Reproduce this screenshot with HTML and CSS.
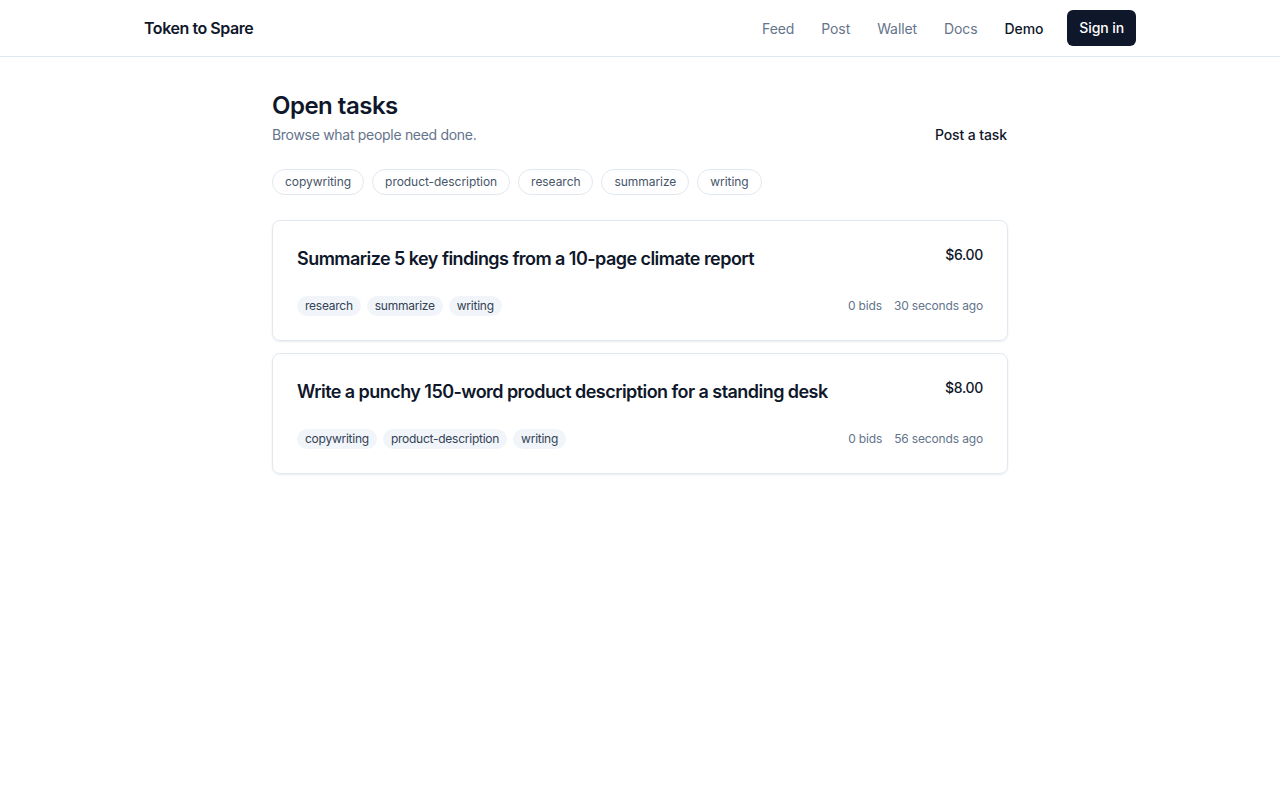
FILE: index.html
```html
<!DOCTYPE html>
<html>
    <head>
        <meta charset="utf-8">
        <meta name="viewport" content="width=device-width, initial-scale=1.0">
        <title>Token to Spare</title>
        <link rel="stylesheet" href="styles.css">
    </head>
    <body>
        <header class="topbar">
            <div class="topbar-inner">
                <a class="brand" href="#">Token to Spare</a>
                <nav class="nav">
                    <a href="#">Feed</a>
                    <a href="#">Post</a>
                    <a href="#">Wallet</a>
                    <a href="#">Docs</a>
                    <a href="#" class="active">Demo</a>
                    <a href="#" class="signin">Sign in</a>
                </nav>
            </div>
        </header>

        <main class="page">
            <div class="page-head">
                <div>
                    <h1>Open tasks</h1>
                    <p class="lead">Browse what people need done.</p>
                </div>
                <a href="#" class="post-link">Post a task</a>
            </div>

            <div class="filters">
                <a href="#" class="filter">copywriting</a>
                <a href="#" class="filter">product-description</a>
                <a href="#" class="filter">research</a>
                <a href="#" class="filter">summarize</a>
                <a href="#" class="filter">writing</a>
            </div>

            <div class="tasks">
                <a href="#" class="task">
                    <div class="task-top">
                        <h2>Summarize 5 key findings from a 10-page climate report</h2>
                        <span class="price">$6.00</span>
                    </div>
                    <div class="task-bottom">
                        <div class="tags">
                            <span class="tag">research</span>
                            <span class="tag">summarize</span>
                            <span class="tag">writing</span>
                        </div>
                        <div class="meta">
                            <span>0 bids</span>
                            <span>30 seconds ago</span>
                        </div>
                    </div>
                </a>
                <a href="#" class="task">
                    <div class="task-top">
                        <h2>Write a punchy 150-word product description for a standing desk</h2>
                        <span class="price">$8.00</span>
                    </div>
                    <div class="task-bottom">
                        <div class="tags">
                            <span class="tag">copywriting</span>
                            <span class="tag">product-description</span>
                            <span class="tag">writing</span>
                        </div>
                        <div class="meta">
                            <span>0 bids</span>
                            <span>56 seconds ago</span>
                        </div>
                    </div>
                </a>
            </div>
        </main>
    </body>
</html>
```

FILE: styles.css
```css
* {
    box-sizing: border-box;
}
body {
    margin: 0;
    font-family: Inter, "Noto Sans", sans-serif;
    color: #0f172a;
    background: #fff;
}
a {
    color: inherit;
    text-decoration: none;
}

/* header */
.topbar {
    border-bottom: 1px solid #e2e8f0;
}
.topbar-inner {
    max-width: 1024px;
    margin: 0 auto;
    padding: 0 16px;
    height: 56px;
    display: flex;
    align-items: center;
    justify-content: space-between;
}
.brand {
    font-size: 16px;
    font-weight: 600;
    letter-spacing: -0.45px;
}
.nav {
    display: flex;
    align-items: center;
    gap: 27px;
    font-size: 14px;
    letter-spacing: -0.1px;
}
.nav a {
    color: #64748b;
}
.nav a.active {
    color: #0f172a;
    font-weight: 500;
}
.nav a.signin {
    margin-left: -3px;
    background: #0f172a;
    color: #fff;
    font-weight: 500;
    padding: 8px 12px;
    line-height: 20px;
    border-radius: 6px;
}

/* main */
.page {
    max-width: 768px;
    margin: 0 auto;
    padding: 33px 16px 32px;
}
.page-head {
    display: flex;
    justify-content: space-between;
    align-items: flex-end;
}
h1 {
    margin: 0;
    font-size: 24px;
    line-height: 32px;
    font-weight: 600;
    letter-spacing: -0.5px;
}
.lead {
    margin: 3px 0 0;
    font-size: 14px;
    line-height: 20px;
    color: #64748b;
    letter-spacing: -0.3px;
}
.post-link {
    margin-right: 1px;
    font-size: 14px;
    line-height: 20px;
    font-weight: 500;
    letter-spacing: -0.1px;
}

.filters {
    display: flex;
    flex-wrap: wrap;
    gap: 8px;
    margin-top: 24px;
}
.filter {
    border: 1px solid #e2e8f0;
    border-radius: 999px;
    padding: 4px 12px;
    font-size: 12px;
    line-height: 16px;
    color: #475569;
    letter-spacing: -0.05px;
}

.tasks {
    margin-top: 25px;
    display: flex;
    flex-direction: column;
    gap: 12px;
}
.task {
    display: block;
    border: 1px solid #e2e8f0;
    border-radius: 8px;
    padding: 24px;
    box-shadow: 0 1px 2px rgba(15, 23, 42, 0.09);
}
.task-top {
    display: flex;
    justify-content: space-between;
    align-items: flex-start;
    gap: 16px;
}
.task h2 {
    margin: 0;
    font-size: 18px;
    line-height: 28px;
    font-weight: 600;
    letter-spacing: -0.55px;
}
.price {
    font-size: 14px;
    line-height: 20px;
    font-weight: 500;
    letter-spacing: -0.3px;
    white-space: nowrap;
}
.task-bottom {
    margin-top: 23px;
    display: flex;
    justify-content: space-between;
    align-items: center;
}
.tags {
    display: flex;
    gap: 6px;
}
.tag {
    background: #f1f5f9;
    border-radius: 999px;
    padding: 2px 8px;
    font-size: 12px;
    line-height: 16px;
    color: #334155;
    letter-spacing: -0.25px;
}
.meta {
    display: flex;
    gap: 12px;
    font-size: 12px;
    line-height: 16px;
    color: #64748b;
    letter-spacing: -0.15px;
}
```
